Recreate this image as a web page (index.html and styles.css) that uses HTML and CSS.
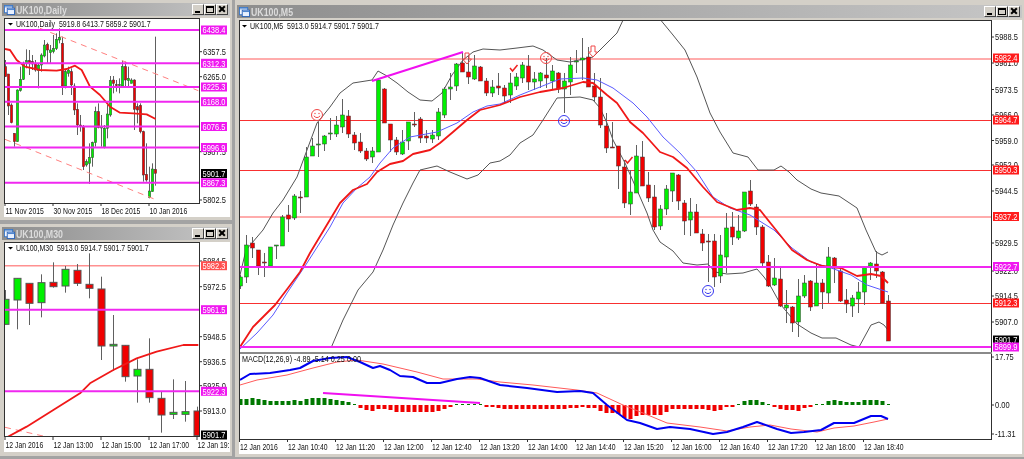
FILE: index.html
```html
<!DOCTYPE html>
<html lang="en">
<head>
<meta charset="utf-8">
<title>UK100 charts</title>
<link rel="stylesheet" href="styles.css">
</head>
<body>
<div class="desktop">
  <div class="col-left">
    <section class="win win-daily">
      <header class="title">
        <svg class="win-icon" viewBox="0 0 12 11"><rect x="0.5" y="0.5" width="9" height="8" class="ic-back"/><rect x="3.5" y="3.5" width="8" height="7" class="ic-front"/><path d="M0 2h10M4 5h8" class="ic-bar"/></svg>
        <span class="title-text">UK100,Daily</span>
        <span class="btns"><i class="btn btn-min"></i><i class="btn btn-max"></i><i class="btn btn-close"></i></span>
      </header>
      <svg class="chart chart-daily" id="daily"></svg>
    </section>
    <section class="win win-m30">
      <header class="title">
        <svg class="win-icon" viewBox="0 0 12 11"><rect x="0.5" y="0.5" width="9" height="8" class="ic-back"/><rect x="3.5" y="3.5" width="8" height="7" class="ic-front"/><path d="M0 2h10M4 5h8" class="ic-bar"/></svg>
        <span class="title-text">UK100,M30</span>
        <span class="btns"><i class="btn btn-min"></i><i class="btn btn-max"></i><i class="btn btn-close"></i></span>
      </header>
      <svg class="chart chart-m30" id="m30"></svg>
    </section>
  </div>
  <section class="win win-main">
    <header class="title">
      <svg class="win-icon" viewBox="0 0 12 11"><rect x="0.5" y="0.5" width="9" height="8" class="ic-back"/><rect x="3.5" y="3.5" width="8" height="7" class="ic-front"/><path d="M0 2h10M4 5h8" class="ic-bar"/></svg>
      <span class="title-text">UK100,M5</span>
      <span class="btns"><i class="btn btn-min"></i><i class="btn btn-max"></i><i class="btn btn-close"></i></span>
    </header>
    <svg class="chart chart-m5" id="m5"></svg>
  </section>
</div>
<script src="chart.js"></script>
</body>
</html>
```
FILE: styles.css
```css
html, body { margin: 0; height: 100%; overflow: hidden; }
body { background: #a3a3a3; font-family: "Liberation Sans", sans-serif; }
.desktop { display: flex; gap: 3px; height: 459px; align-items: flex-start; }
.col-left { width: 232px; display: flex; flex-direction: column; gap: 4px; }
.win { background: #d4d0c8; padding: 3px 2px 3px 4px; box-sizing: border-box; display: flex; flex-direction: column; }
.win-daily { height: 220px; }
.win-m30 { height: 232px; }
.win-main { flex: 1; height: 457px; padding-top: 5px; }
.title { height: 13px; margin-bottom: 2px; margin-left: -2px; display: flex; align-items: center; gap: 1px; padding: 0 2px;
  background: linear-gradient(90deg, #8d8d8d, #c6c6c6); }
.win-icon { width: 11px; height: 10px; flex: none; }
.ic-back { fill: #f4f8ff; stroke: #3a78c8; }
.ic-front { fill: #e8f0ff; stroke: #2a62b8; }
.ic-bar { stroke: #3a78c8; fill: none; }
.title-text { font-size: 11px; font-weight: bold; color: #dcdcdc; flex: 1; transform: scaleX(0.8); transform-origin: left center; filter: blur(0.3px); }
.btns { display: flex; }
.btn { display: block; width: 12px; height: 11px; box-sizing: border-box; background: #d4d0c8; border: 1px solid; border-color: #fff #404040 #404040 #fff; position: relative; }
.btn-min::after { content: ""; position: absolute; left: 2px; bottom: 1px; width: 5px; height: 2px; background: #000; }
.btn-max::after { content: ""; position: absolute; left: 1px; top: 1px; width: 8px; height: 7px; border: 1px solid #000; border-top-width: 2px; box-sizing: border-box; }
.btn-close::before, .btn-close::after { content: ""; position: absolute; left: 1px; top: 3px; width: 8px; height: 2px; background: #000; }
.btn-close::before { transform: rotate(45deg); }
.btn-close::after { transform: rotate(-45deg); }

.chart { display: block; flex: none; background: #fff; filter: blur(0.35px); }
.frame { fill: none; stroke: #303030; stroke-width: 1; }
.sep { stroke: #8a8a8a; stroke-width: 2; }
.tick { stroke: #303030; stroke-width: 1; }
.wick { stroke: #606060; stroke-width: 1; }
.body-up { fill: #00f000; stroke: #3a3a3a; stroke-width: 0.5; }
.body-down { fill: #f00000; stroke: #3a3a3a; stroke-width: 0.5; }
.chart-m30 .body-up, .chart-m30 .body-down { stroke: #555; stroke-width: 1; }
.band { fill: none; stroke: #555; stroke-width: 1; }
.ma-red { fill: none; stroke: #f01818; stroke-width: 1.8; stroke-linejoin: round; }
.ma-blue { fill: none; stroke: #5a5aff; stroke-width: 1; }
.macd-main { fill: none; stroke: #0000f0; stroke-width: 2; stroke-linejoin: round; }
.macd-signal { fill: none; stroke: #ff5a5a; stroke-width: 1; }
.trend { fill: none; stroke: #f010f0; stroke-width: 2; }
.chan { fill: none; stroke: #ff8080; stroke-width: 1; stroke-dasharray: 6 5; }
.hl-red { stroke: #f83030; stroke-width: 1; }
.hl-pink { stroke: #ff9090; stroke-width: 1.6; }
.hl-mag { stroke: #f028f0; stroke-width: 2; }
.hist-up { fill: #007800; }
.hist-down { fill: #f00000; }
.txt { font-size: 9px; fill: #111; white-space: pre; }
.lab-txt { font-size: 9px; fill: #fff; }
.lab-black { fill: #000; }
.lab-red { fill: #ff1c1c; }
.lab-pink { fill: #ff5050; }
.lab-mag { fill: #f018f0; }
.tri { fill: #000; }
.mk-red { fill: none; stroke: #f04848; stroke-width: 1; }
.mk-blue { fill: none; stroke: #3838f0; stroke-width: 1; }
.mk-red-fill { fill: #f04848; }
.mk-blue-fill { fill: #3838f0; }
.mk-check { fill: none; stroke: #f02020; stroke-width: 1.5; }
```
FILE: chart.js
```js
var NS = "http://www.w3.org/2000/svg";

function el(parent, tag, attrs, text) {
  var e = document.createElementNS(NS, tag);
  for (var k in attrs) e.setAttribute(k, attrs[k]);
  if (text !== undefined) e.textContent = text;
  parent.appendChild(e);
  return e;
}
/* The reference font is narrower than anything installed: squeeze the real text to the measured width. */
function squeeze(t, ratio) {
  t.setAttribute("textLength", (t.getComputedTextLength() * ratio).toFixed(1));
  t.setAttribute("lengthAdjust", "spacingAndGlyphs");
}
function poly(p, pts, cls) {
  el(p, "polyline", { points: pts.map(function (a) { return a[0] + "," + a[1]; }).join(" "), class: cls });
}
function hline(p, y, x0, x1, cls) { el(p, "line", { x1: x0, x2: x1, y1: y, y2: y, class: cls }); }

function setup(id, x, y, w, h) {
  var s = document.getElementById(id);
  s.setAttribute("width", w);
  s.setAttribute("height", h);
  s.setAttribute("viewBox", x + " " + y + " " + w + " " + h);
  return s;
}
function plotArea(s, x, y, w, h) {
  return el(s, "svg", { x: x, y: y, width: w, height: h, viewBox: x + " " + y + " " + w + " " + h });
}
function candles(p, data, x0, dx, half, scale, yo) {
  data.forEach(function (c, i) {
    var x = x0 + i * dx;
    var Y = function (v) { return yo + v * scale; };
    el(p, "line", { x1: x + 0.5, x2: x + 0.5, y1: Y(c[0]), y2: Y(c[3]), class: "wick" });
    el(p, "rect", { x: x + 0.5 - half, y: Y(c[1]), width: half * 2, height: Math.max(Y(c[2]) - Y(c[1]), 1), class: c[4] ? "body-up" : "body-down" });
  });
}
function label(s, x, y, t, kind) {
  el(s, "rect", { x: x, y: y - 4.5, width: 26, height: 9, class: "lab-" + kind });
  squeeze(el(s, "text", { x: x + 1.5, y: y + 3.3, class: "lab-txt" }, t), 0.83);
}
function ylab(s, x, y, t) {
  el(s, "line", { x1: x - 3, x2: x - 1, y1: y, y2: y, class: "tick" });
  squeeze(el(s, "text", { x: x, y: y + 3.3, class: "txt" }, t), 0.83);
}
function xlab(s, x, axisY, t) {
  el(s, "line", { x1: x, x2: x, y1: axisY, y2: axisY + 3, class: "tick" });
  squeeze(el(s, "text", { x: x + 0.5, y: axisY + 11, class: "txt" }, t), 0.76);
}
function header(s, x, y, t) {
  el(s, "polygon", { points: [x, y - 4, x + 5, y - 4, x + 2.5, y - 1.5].join(" "), class: "tri" });
  squeeze(el(s, "text", { x: x + 8, y: y, class: "txt" }, t), 0.78);
}
function smiley(p, x, y, kind) {
  var c = "mk-" + kind;
  el(p, "circle", { cx: x, cy: y, r: 5.5, class: c });
  el(p, "circle", { cx: x - 2, cy: y - 1.5, r: 0.7, class: c + "-fill" });
  el(p, "circle", { cx: x + 2, cy: y - 1.5, r: 0.7, class: c + "-fill" });
  el(p, "path", { d: "M" + (x - 3.2) + " " + (y + 0.8) + "q3.2 3.6 6.4 0", class: c });
}
function arrow(p, x, y) {
  el(p, "path", { d: "M" + (x - 2) + " " + (y - 6) + "h4v6h2.5l-4.5 5-4.5-5h2.5z", class: "mk-red" });
}
function check(p, x, y) {
  el(p, "path", { d: "M" + (x - 4) + " " + (y + 1) + "l2.5 3 5-6", class: "mk-check" });
}

/* ---------- Daily ---------- */
(function () {
  var s = setup("daily", 4, 18, 226, 199);
  var p = plotArea(s, 5, 19, 194, 184);
  var d = [
    [180,200,230,230,0],[222,222,318,345,0],[310,315,368,370,0],[400,400,425,440,0],[268,270,425,425,1],
    [200,238,272,275,1],[185,190,238,240,1],[148,182,190,205,1],[150,182,190,225,0],[165,185,192,210,0],
    [180,190,210,215,0],[190,195,212,265,1],[160,165,195,215,1],[120,135,168,172,1],[128,133,150,190,0],
    [135,150,158,190,1],[105,145,155,160,1],[100,118,146,150,1],[85,112,120,130,1],[110,130,258,285,0],
    [210,215,258,265,1],[200,210,220,230,1],[205,215,255,285,0],[250,258,330,345,0],[310,328,375,405,0],
    [345,375,378,395,0],[375,382,500,510,0],[478,485,495,500,1],[430,472,490,552,1],[425,428,473,500,1],
    [320,335,428,440,1],[310,335,383,385,0],[345,380,384,440,1],[375,385,442,445,1],[315,342,385,415,1],
    [228,242,345,350,1],[228,240,250,280,0],[240,254,256,275,0],[235,254,256,280,1],[182,200,258,260,1],
    [185,200,240,258,0],[200,235,242,260,1],[235,240,250,250,1],[238,240,328,390,0],[310,320,330,370,0],
    [310,316,395,400,0],[392,395,525,545,0],[430,523,540,545,0],[500,573,593,595,1],[490,507,575,575,1],
    [110,508,520,557,0]
  ];
  candles(p, d, 5, 3, 1.2, 1 / 3, 0);
  [[120,85,595,272],[15,418,470,600]].forEach(function (c) {
    poly(p, [[c[0] / 3, c[1] / 3], [c[2] / 3, c[3] / 3]], "chan");
  });
  poly(p, [[15,147],[30,150],[50,180],[75,200],[120,210],[170,212],[200,207],[225,197],[245,210],[270,260],[300,285],[330,320],[360,338],[400,340],[440,343],[467,357]]
    .map(function (a) { return [a[0] / 3, a[1] / 3]; }), "ma-red");
  [30, 63.3, 87, 101.7, 126.5, 147.5, 182.7].forEach(function (y) { hline(p, y, 5, 199, "hl-mag"); });
  el(s, "rect", { x: 4.5, y: 18.5, width: 195, height: 185, class: "frame" });
  header(s, 8, 27, "UK100,Daily  5919.8 6413.7 5859.2 5901.7");
  [[51.7,"6357.5"],[76.7,"6265.0"],[151.7,"5987.5"],[200,"5802.5"]].forEach(function (l) { ylab(s, 203, l[0], l[1]); });
  [[30,"6438.4"],[63.3,"6312.3"],[87,"6225.3"],[101.7,"6168.0"],[126.5,"6076.5"],[147.5,"5996.9"],[182.7,"5867.3"]].forEach(function (l) { label(s, 201, l[0], l[1], "mag"); });
  label(s, 201, 173.5, "5901.7", "black");
  [[5,"11 Nov 2015"],[53,"30 Nov 2015"],[101,"18 Dec 2015"],[149,"10 Jan 2016"]].forEach(function (l) { xlab(s, l[0], 203, l[1]); });
})();

/* ---------- M30 ---------- */
(function () {
  var s = setup("m30", 4, 242, 226, 210);
  var p = plotArea(s, 5, 243, 194, 194);
  var d = [
    [210,238,313,313,1],[175,175,240,328,1],[190,190,250,315,0],[163,188,248,292,1],[127,187,200,203,0],
    [138,148,198,218,1],[132,151,190,198,0],[100,193,205,235,0],[170,207,378,420,0],[285,373,378,452,1],
    [376,376,470,485,0],[418,448,468,548,1],[355,448,533,548,0],[515,535,585,638,0],[478,577,583,597,1],
    [483,575,583,605,1],[560,573,647,647,0]
  ];
  hline(p, 265.7, 5, 199, "hl-pink");
  poly(p, [[5, 427.3], [53, 438.3]], "chan");
  candles(p, d, 5, 12, 3.5, 1 / 3, 220);
  poly(p, [[15,655],[80,620],[160,570],[240,520],[270,490],[340,450],[410,415],[470,395],[550,375],[595,375]]
    .map(function (a) { return [a[0] / 3, 220 + a[1] / 3]; }), "ma-red");
  hline(p, 309.7, 5, 199, "hl-mag");
  hline(p, 391.3, 5, 199, "hl-mag");
  el(s, "rect", { x: 4.5, y: 242.5, width: 195, height: 194, class: "frame" });
  header(s, 8, 251, "UK100,M30  5913.0 5914.7 5901.7 5901.7");
  [[261,"5984.5"],[286.7,"5972.5"],[336.7,"5948.5"],[361.7,"5936.5"],[385.7,"5925.0"],[411,"5913.0"]].forEach(function (l) { ylab(s, 203, l[0], l[1]); });
  label(s, 201, 265.7, "5982.3", "pink");
  label(s, 201, 309.7, "5961.5", "mag");
  label(s, 201, 391.3, "5922.3", "mag");
  label(s, 201, 435, "5901.7", "black");
  [[5,"12 Jan 2016"],[53,"12 Jan 13:00"],[101,"12 Jan 15:00"],[149,"12 Jan 17:00"],[197,"12 Jan 19:"]].forEach(function (l) { xlab(s, l[0], 437, l[1]); });
})();

/* ---------- M5 ---------- */
(function () {
  var s = setup("m5", 239, 20, 783, 434);
  var p = plotArea(s, 240, 21, 752, 331);
  var d = [
    [275,277,286,289,1],[235,245,277,283,1],[237,243,248,258,0],[250,250,266,275,0],[253,262,263,277,0],
    [247,247,266,266,1],[245,245,246,259,1],[215,217,246,246,1],[205,215,219,232,0],[194,196,218,220,1],
    [191,197,198,213,0],[147,157,197,197,1],[138,146,156,156,1],[122,144,145,157,1],[135,136,144,151,1],
    [118,133,134,140,1],[116,125,134,137,1],[99,115,127,133,1],[110,116,134,138,0],[132,135,143,150,0],
    [133,142,151,153,0],[148,151,159,161,0],[147,151,157,163,1],[78,80,152,152,1],[88,89,123,123,0],
    [124,124,140,152,0],[137,140,152,155,0],[130,142,154,155,1],[122,122,141,150,1],[112,124,125,127,0],
    [117,119,138,143,0],[130,136,138,143,0],[130,135,139,143,1],[108,112,136,140,1],[87,89,115,118,1],
    [73,87,89,100,1],[63,64,86,91,1],[52,63,72,72,0],[55,72,77,84,0],[55,66,79,80,1],
    [66,67,81,81,0],[78,81,93,96,0],[80,87,93,97,1],[73,86,88,95,0],[85,88,96,103,0],
    [73,83,95,103,1],[73,77,86,90,1],[62,65,78,83,1],[55,66,82,90,0],[72,79,82,90,1],
    [72,73,81,88,1],[58,75,78,88,0],[65,71,81,90,1],[72,73,89,93,0],[73,81,89,113,1],
    [57,65,82,95,1],[50,61,62,73,1],[38,58,60,80,1],[47,57,87,87,0],[73,86,97,102,0],
    [78,97,125,128,0],[113,126,148,153,0],[122,147,148,148,0],[146,146,166,189,0],[160,167,203,208,0],
    [170,192,204,215,1],[145,156,193,193,1],[141,157,186,186,0],[172,185,198,202,0],[185,197,227,230,0],
    [205,209,226,230,1],[185,189,209,215,1],[173,173,191,202,1],[174,175,201,210,0],[200,203,221,235,0],
    [198,212,220,236,1],[204,212,233,233,0],[229,234,243,251,0],[234,241,242,282,0],[234,241,277,287,0],
    [235,255,276,283,1],[213,228,257,273,1],[212,227,237,245,0],[215,231,238,240,1],[192,192,231,232,1],
    [180,191,204,206,0],[204,207,227,235,0],[225,227,263,268,0],[255,262,286,287,0],[258,278,285,286,1],
    [266,279,306,307,0],[290,305,308,323,1],[306,307,323,332,0],[279,296,322,337,1],[275,283,296,298,1],
    [280,281,307,311,0],[263,283,306,306,1],[279,283,292,309,0],[247,257,293,303,1],[257,258,268,283,0],
    [268,271,301,302,0],[289,300,304,313,0],[295,298,306,317,1],[282,292,299,313,1],[267,267,292,305,1],
    [262,263,266,280,1],[251,264,271,278,0],[271,272,303,303,0],[295,301,341,341,0]
  ];

  var upper = [[240,275],[246,250],[263,230],[273,213],[283,200],[297,177],[307,150],[317,123],[330,107],[340,93],[353,83],[372,80],[378,71],[387,76],[397,83],[408,92],[420,100],[432,101],[442,93],[452,75],[463,60],[473,52],[483,49],[500,50],[517,48],[533,46],[543,50],[557,60],[570,62],[593,57],[607,43],[617,33],[624,18]];
  var upper2 = [[659,18],[673,35],[685,50],[697,77],[710,113],[720,132],[733,153],[748,157],[758,170],[774,170],[781,166],[789,172],[797,180],[811,189],[821,193],[839,196],[857,208],[866,230],[876,252],[882,255],[888,252]];
  var lower = [[331,348],[343,320],[358,290],[373,272],[383,250],[393,225],[403,203],[413,183],[420,170],[437,166],[450,172],[467,179],[478,175],[490,163],[500,161],[510,155],[520,143],[533,135],[543,120],[557,98],[580,97],[593,100],[600,108],[607,123],[613,140],[625,163],[637,190],[647,213],[653,230],[660,242],[673,251],[683,263],[697,265],[708,264],[715,272],[727,274],[743,273],[757,269],[764,277],[771,287],[781,305],[797,324],[811,333],[822,338],[836,338],[851,345],[859,347],[871,325],[879,322],[884,325],[888,330]];
  var red = [[240,347],[253,327],[263,317],[275,305],[288,288],[300,272],[310,253],[325,228],[340,203],[353,190],[367,184],[377,172],[390,164],[403,161],[413,154],[430,150],[440,143],[453,132],[467,120],[480,110],[500,105],[520,97],[540,92],[563,88],[583,82],[593,83],[607,95],[617,103],[630,122],[643,133],[660,152],[673,157],[687,168],[703,187],[717,202],[737,210],[750,208],[760,210],[776,230],[792,250],[807,260],[822,266],[841,268],[857,276],[871,274],[881,276],[888,283]];
  var blue = [[240,349],[257,333],[273,315],[287,293],[307,263],[330,227],[343,203],[357,188],[370,177],[380,163],[393,148],[410,137],[437,132],[457,123],[473,112],[487,106],[500,104],[520,95],[540,87],[560,79],[583,78],[597,80],[613,88],[633,103],[647,117],[663,137],[680,153],[697,172],[713,197],[730,208],[750,215],[774,230],[792,248],[811,262],[831,268],[851,275],[867,285],[888,292]];

  hline(p, 59, 240, 992, "hl-pink");
  hline(p, 120.5, 240, 992, "hl-red");
  hline(p, 170.5, 240, 992, "hl-red");
  hline(p, 217, 240, 992, "hl-pink");
  hline(p, 303.5, 240, 992, "hl-red");
  poly(p, upper, "band");
  poly(p, upper2, "band");
  poly(p, lower, "band");
  candles(p, d, 240, 6, 2, 1, 0);
  poly(p, blue, "ma-blue");
  poly(p, red, "ma-red");
  poly(p, [[372,81],[463,52]], "trend");
  hline(p, 267, 240, 992, "hl-mag");
  hline(p, 347, 240, 992, "hl-mag");
  smiley(p, 317, 115, "red");
  smiley(p, 546, 58, "red");
  smiley(p, 564, 121, "blue");
  smiley(p, 708, 291, "blue");
  arrow(p, 467, 59);
  arrow(p, 593, 52);
  check(p, 514, 67);
  check(p, 629, 159);

  /* MACD pane */
  var q = plotArea(s, 240, 354, 752, 85);
  var hist = [6,6,7,6,5,4,4,4,4,5,4,6,7,7,7,6,5,4,3,1,-3,-5,-6,-4,-4,-5,-7,-7,-7,-7,-7,-7,-7,-6,-4,-2,1,1,1,1,1,-2,-2,-3,
    -4,-4,-4,-4,-4,-4,-4,-4,-4,-4,-4,-3,-3,-2,-3,-3,-6,-8,-8,-9,-13,-14,-11,-10,-10,-10,-10,-7,-4,-4,-4,-4,-4,-4,-5,-6,-5,-2,-2,1,4,5,5,3,1,
    -2,-4,-5,-5,-6,-3,-2,1,1,4,5,4,3,3,3,5,5,5,4,1];
  hist.forEach(function (v, i) {
    var x = 240 + i * 6;
    var thin = Math.abs(v) === 1;
    el(q, "rect", { x: x - (thin ? 1 : 1.5), y: v > 0 ? 405 - v : 405, width: thin ? 3 : 4, height: Math.abs(v), class: v > 0 ? "hist-up" : "hist-down" });
  });
  poly(q, [[240,385],[257,380],[287,375],[313,368],[337,362],[357,360],[383,364],[417,372],[443,379],[477,379],[500,382],[533,385],[577,390],[597,393],[623,405],[643,413],[667,423],[700,427],[727,431],[750,427],[770,425],[791,429],[817,432],[834,428],[854,426],[874,422],[888,419]], "macd-signal");
  poly(q, [[240,380],[250,374],[270,373],[290,370],[300,368],[313,361],[330,358],[347,357],[360,362],[373,368],[380,366],[390,370],[400,376],[413,377],[427,383],[440,383],[457,379],[470,377],[480,378],[500,385],[527,388],[557,392],[580,391],[593,393],[607,405],[627,420],[640,423],[657,429],[670,427],[690,429],[713,434],[727,432],[743,427],[757,422],[777,429],[791,433],[804,432],[821,430],[834,423],[854,423],[871,416],[881,416],[888,419]], "macd-main");
  poly(q, [[323,393],[480,403]], "trend");

  el(s, "rect", { x: 239.5, y: 20.5, width: 752, height: 419, class: "frame" });
  el(s, "line", { x1: 240, x2: 992, y1: 353, y2: 353, class: "sep" });
  header(s, 242, 29, "UK100,M5  5913.0 5914.7 5901.7 5901.7");
  squeeze(el(s, "text", { x: 242, y: 362, class: "txt" }, "MACD(12,26,9) -4.89 -5.14 0.25 0.00"), 0.8);

  [[37,"5988.5"],[63,"5981.0"],[89.5,"5973.5"],[115,"5966.0"],[140.5,"5959.0"],[165,"5952.0"],[191,"5944.5"],[243,"5929.5"],[271,"5922.0"],[296,"5914.5"],[322,"5907.0"],[357,"17.75"],[405,"0.00"],[434,"-11.31"]].forEach(function (l) { ylab(s, 995, l[0], l[1]); });
  [[58,"5982.4","red"],[120,"5964.7","red"],[170,"5950.3","red"],[216.5,"5937.2","red"],[266.5,"5922.7","mag"],[303,"5912.3","red"],[340,"5901.7","black"],[347,"5899.9","mag"]].forEach(function (l) { label(s, 993, l[0], l[1], l[2]); });
  ["12 Jan 2016","12 Jan 10:40","12 Jan 11:20","12 Jan 12:00","12 Jan 12:40","12 Jan 13:20","12 Jan 14:00","12 Jan 14:40","12 Jan 15:20","12 Jan 16:00","12 Jan 16:40","12 Jan 17:20","12 Jan 18:00","12 Jan 18:40"].forEach(function (t, i) { xlab(s, 239.5 + 48 * i, 439, t); });
})();
```
